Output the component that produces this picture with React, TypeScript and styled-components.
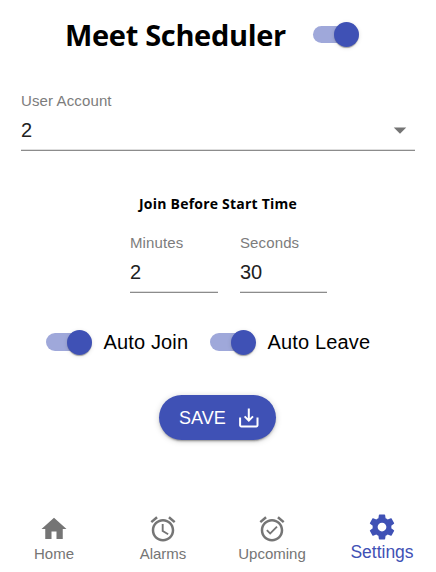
import React from 'react';
import styled, { createGlobalStyle } from 'styled-components';

const GlobalStyle = createGlobalStyle`
  * { box-sizing: border-box; }
  body {
    margin: 0;
    background: #fff;
    color: #000;
    font-family: 'Liberation Sans', Arial, sans-serif;
  }
`;

const Page = styled.main`
  display: flex;
  flex-direction: column;
  width: 436px;
  height: 572px;
  overflow: hidden;
`;

const Header = styled.header`
  display: flex;
  align-items: center;
  height: 70px;
  padding: 0 0 1px 65px;
`;

const Title = styled.h1`
  width: 248px;
  margin: 0;
  padding-top: 1px;
  font: 700 29px/40px 'Open Sans', 'Noto Sans', sans-serif;
  letter-spacing: -0.32px;
  white-space: nowrap;
`;

const Track = styled.span`
  display: flex;
  align-items: center;
  justify-content: flex-end;
  flex: none;
  width: 42.5px;
  height: 17.5px;
  border-radius: 9px;
  background: #9fa8da;
`;

const Thumb = styled.span`
  flex: none;
  width: 25px;
  height: 25px;
  margin-right: -3.5px;
  border-radius: 50%;
  background: #3f51b5;
  box-shadow: 0 2px 1px -1px rgba(0, 0, 0, 0.2), 0 1px 1px rgba(0, 0, 0, 0.14),
    0 1px 4px rgba(0, 0, 0, 0.12);
`;

const Field = styled.div<{ $width: number }>`
  width: ${(p) => p.$width}px;
  height: 60px;
  border-bottom: 1px solid #8c8c8c;
  box-shadow: inset 0 -1px 0 #dedede;
`;

const Label = styled.div`
  color: #7c7c7c;
  font-size: 15px;
  line-height: 20px;
  letter-spacing: 0.12px;
  white-space: nowrap;
`;

const Value = styled.div`
  display: flex;
  align-items: center;
  justify-content: space-between;
  height: 38px;
  color: #212121;
  font-size: 20px;
`;

const Account = styled.section`
  padding: 21px 21px 0;
`;

const Subheading = styled.h2`
  margin: 42px 0 0;
  font: 700 14px/22px 'Open Sans', 'Noto Sans', sans-serif;
  letter-spacing: 0.22px;
  text-align: center;
`;

const Times = styled.section`
  display: flex;
  gap: 22px;
  padding: 18px 0 0 130px;
`;

const Options = styled.section`
  display: flex;
  align-items: center;
  height: 50px;
  margin-top: 24px;
  padding-left: 46px;
`;

const Option = styled.div`
  display: flex;
  align-items: center;
  gap: 15px;
  width: 164px;
  font-size: 20px;
  line-height: 28px;
  letter-spacing: 0.15px;
  white-space: nowrap;
`;

const SaveButton = styled.button`
  display: flex;
  align-items: center;
  justify-content: space-between;
  flex: none;
  width: 117px;
  height: 45px;
  margin: 28px 0 0 159px;
  padding: 0 16px 0 20px;
  border: 0;
  border-radius: 23px;
  background: #3f51b5;
  color: #fff;
  font: 400 18px/24px 'Liberation Sans', Arial, sans-serif;
  box-shadow: 0 3px 1px -2px rgba(0, 0, 0, 0.2), 0 2px 2px rgba(0, 0, 0, 0.14),
    0 1px 6px rgba(0, 0, 0, 0.18);
`;

const Nav = styled.nav`
  display: grid;
  grid-template-columns: 108px 110px 108px 112px;
  margin-top: auto;
  height: 70px;
`;

const NavItem = styled.div<{ $active?: boolean }>`
  display: flex;
  flex-direction: column;
  align-items: center;
  padding-top: ${(p) => (p.$active ? 10 : 12)}px;
  color: ${(p) => (p.$active ? '#3f51b5' : '#757575')};
  font-size: ${(p) => (p.$active ? 17.5 : 15)}px;
  line-height: 20px;
  svg { flex: none; }
`;

const ICONS = {
  home: 'M10 20v-6h4v6h5v-8h3L12 3 2 12h3v8z',
  alarm:
    'M22 5.72l-4.6-3.86-1.29 1.53 4.6 3.86L22 5.72zM7.88 3.39L6.6 1.86 2 5.71l1.29 1.53 4.59-3.85zM12.5 8H11v6l4.75 2.85.75-1.23-4-2.37V8zM12 4c-4.97 0-9 4.03-9 9s4.02 9 9 9c4.97 0 9-4.03 9-9s-4.03-9-9-9zm0 16c-3.87 0-7-3.13-7-7s3.13-7 7-7 7 3.13 7 7-3.13 7-7 7z',
  alarmOn:
    'M22 5.72l-4.6-3.86-1.29 1.53 4.6 3.86L22 5.72zM7.88 3.39L6.6 1.86 2 5.71l1.29 1.53 4.59-3.85zM12 4c-4.97 0-9 4.03-9 9s4.02 9 9 9c4.97 0 9-4.03 9-9s-4.03-9-9-9zm0 16c-3.87 0-7-3.13-7-7s3.13-7 7-7 7 3.13 7 7-3.13 7-7 7zm-1.46-5.47L8.41 12.4l-1.06 1.06 3.18 3.18 6-6-1.06-1.06-4.93 4.95z',
  settings:
    'M19.43 12.98c.04-.32.07-.64.07-.98s-.03-.66-.07-.98l2.11-1.65c.19-.15.24-.42.12-.64l-2-3.46c-.12-.22-.39-.3-.61-.22l-2.49 1c-.52-.4-1.08-.73-1.69-.98l-.38-2.65C14.46 2.18 14.25 2 14 2h-4c-.25 0-.46.18-.49.42l-.38 2.65c-.61.25-1.17.59-1.69.98l-2.49-1c-.23-.09-.49 0-.61.22l-2 3.46c-.13.22-.07.49.12.64l2.11 1.65c-.04.32-.07.65-.07.98s.03.66.07.98l-2.11 1.65c-.19.15-.24.42-.12.64l2 3.46c.12.22.39.3.61.22l2.49-1c.52.4 1.08.73 1.69.98l.38 2.65c.03.24.24.42.49.42h4c.25 0 .46-.18.49-.42l.38-2.65c.61-.25 1.17-.59 1.69-.98l2.49 1c.23.09.49 0 .61-.22l2-3.46c.12-.22.07-.49-.12-.64l-2.11-1.65zM12 15.5c-1.93 0-3.5-1.57-3.5-3.5s1.57-3.5 3.5-3.5 3.5 1.57 3.5 3.5-1.57 3.5-3.5 3.5z',
  dropdown: 'M7 10l5 5 5-5z',
};

const Icon = ({ name }: { name: keyof typeof ICONS }) => (
  <svg width="30" height="30" viewBox="0 0 24 24" fill="currentColor">
    <path d={ICONS[name]} />
  </svg>
);

const ArrowIcon = styled.span`
  display: flex;
  color: #757575;
`;

const Switch = () => (
  <Track role="switch" aria-checked="true">
    <Thumb />
  </Track>
);

const SaveIcon = () => (
  <svg width="22" height="22" viewBox="0 0 22 22" fill="none" stroke="#fff" strokeWidth="2">
    <path d="M10.8 1.5v12M6.6 9.4l4.2 4.2L15 9.4" />
    <path d="M2.1 10.4v7.9a1.2 1.2 0 0 0 1.2 1.2h15a1.2 1.2 0 0 0 1.2-1.2v-7.9" />
  </svg>
);

export default function App() {
  return (
    <Page>
      <GlobalStyle />
      <Header>
        <Title>Meet Scheduler</Title>
        <Switch />
      </Header>
      <Account>
        <Field $width={394}>
          <Label>User Account</Label>
          <Value>
            2
            <ArrowIcon>
              <Icon name="dropdown" />
            </ArrowIcon>
          </Value>
        </Field>
      </Account>
      <Subheading>Join Before Start Time</Subheading>
      <Times>
        <Field $width={88}>
          <Label>Minutes</Label>
          <Value>2</Value>
        </Field>
        <Field $width={87}>
          <Label>Seconds</Label>
          <Value>30</Value>
        </Field>
      </Times>
      <Options>
        <Option>
          <Switch />
          Auto Join
        </Option>
        <Option>
          <Switch />
          Auto Leave
        </Option>
      </Options>
      <SaveButton>
        SAVE
        <SaveIcon />
      </SaveButton>
      <Nav>
        <NavItem>
          <Icon name="home" />
          Home
        </NavItem>
        <NavItem>
          <Icon name="alarm" />
          Alarms
        </NavItem>
        <NavItem>
          <Icon name="alarmOn" />
          Upcoming
        </NavItem>
        <NavItem $active>
          <Icon name="settings" />
          Settings
        </NavItem>
      </Nav>
    </Page>
  );
}
